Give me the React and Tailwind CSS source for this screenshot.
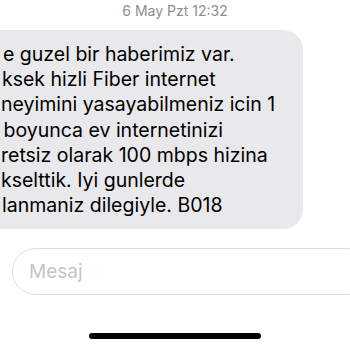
import React from "react";

const lines = [
  { text: "e guzel bir haberimiz var.", pad: "pl-[3px]" },
  { text: "ksek hizli Fiber internet", pad: "pl-[2px]" },
  { text: "neyimini yasayabilmeniz icin 1", pad: "pl-[1px]" },
  { text: "y boyunca ev internetinizi", pad: "ml-[-13px]" },
  { text: "retsiz olarak 100 mbps hizina", pad: "pl-[1px]" },
  { text: "kselttik. Iyi gunlerde", pad: "pl-[1px]" },
  { text: "lanmaniz dilegiyle. B018", pad: "pl-[2px]" },
];

const App = () => {
  return (
    <div
      className="w-[350px] h-[350px] bg-white overflow-hidden flex flex-col"
      style={{ fontFamily: "Inter, 'Liberation Sans', sans-serif" }}
    >
      <div className="pt-[3px] text-center text-[14px] leading-[16px] text-[#8e8e93]">
        6 May Pzt 12:32
      </div>

      <div className="mt-[11px] w-[303px] rounded-r-[20px] bg-[#e9e9eb] pt-[12px] pb-[11px] overflow-hidden">
        {lines.map((line, i) => (
          <p
            key={i}
            className={`${line.pad} whitespace-nowrap text-[19.5px] leading-[25.2px] text-black`}
          >
            {line.text}
          </p>
        ))}
      </div>

      <div className="mt-[19px] ml-[12px] w-[360px] h-[47px] shrink-0 rounded-full border border-[#dedee0] flex items-center pl-[16px]">
        <span className="text-[19px] text-[#c5c5c8]">Mesaj</span>
      </div>

      <div className="mt-[38px] flex justify-center">
        <div className="w-[172px] h-[6px] rounded-full bg-black" />
      </div>
    </div>
  );
};

export default App;
